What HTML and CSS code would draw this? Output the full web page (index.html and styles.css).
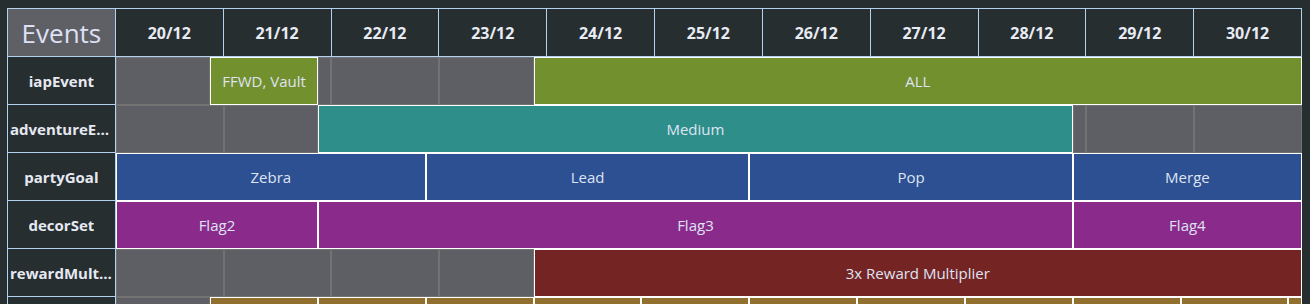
FILE: index.html
```html
<!DOCTYPE html>
<html lang="en">
<head>
<meta charset="utf-8">
<title>Events timeline</title>
<link rel="stylesheet" href="styles.css">
</head>
<body>
<div class="timeline">
  <div class="head corner">Events</div>
  <div class="head">20/12</div>
  <div class="head">21/12</div>
  <div class="head">22/12</div>
  <div class="head">23/12</div>
  <div class="head">24/12</div>
  <div class="head">25/12</div>
  <div class="head">26/12</div>
  <div class="head">27/12</div>
  <div class="head">28/12</div>
  <div class="head">29/12</div>
  <div class="head">30/12</div>

  <div class="label"><span>iapEvent</span></div>
  <div class="track">
    <div class="seg empty" style="width:7.9545%"></div>
    <div class="seg green" style="width:9.0909%">FFWD, Vault</div>
    <div class="seg empty" style="width:1.1364%"></div>
    <div class="seg empty" style="width:9.0909%"></div>
    <div class="seg empty" style="width:7.9545%"></div>
    <div class="seg green" style="width:64.7727%">ALL</div>
  </div>

  <div class="label"><span>adventureEvent</span></div>
  <div class="track">
    <div class="seg empty" style="width:9.0909%"></div>
    <div class="seg empty" style="width:7.9545%"></div>
    <div class="seg teal" style="width:63.6364%">Medium</div>
    <div class="seg empty" style="width:1.1364%"></div>
    <div class="seg empty" style="width:9.0909%"></div>
    <div class="seg empty" style="width:9.0909%"></div>
  </div>

  <div class="label"><span>partyGoal</span></div>
  <div class="track">
    <div class="seg blue" style="width:26.1364%">Zebra</div>
    <div class="seg blue" style="width:27.2727%">Lead</div>
    <div class="seg blue" style="width:27.2727%">Pop</div>
    <div class="seg blue" style="width:19.3182%">Merge</div>
  </div>

  <div class="label"><span>decorSet</span></div>
  <div class="track">
    <div class="seg purple" style="width:17.0455%">Flag2</div>
    <div class="seg purple" style="width:63.6364%">Flag3</div>
    <div class="seg purple" style="width:19.3182%">Flag4</div>
  </div>

  <div class="label"><span>rewardMultiplier</span></div>
  <div class="track">
    <div class="seg empty" style="width:9.0909%"></div>
    <div class="seg empty" style="width:9.0909%"></div>
    <div class="seg empty" style="width:9.0909%"></div>
    <div class="seg empty" style="width:7.9545%"></div>
    <div class="seg red" style="width:64.7727%">3x Reward Multiplier</div>
  </div>

  <div class="label"><span></span></div>
  <div class="track">
    <div class="seg empty" style="width:7.9545%"></div>
    <div class="seg brown" style="width:9.0909%"></div>
    <div class="seg brown" style="width:9.0909%"></div>
    <div class="seg brown" style="width:9.0909%"></div>
    <div class="seg brown" style="width:9.0909%"></div>
    <div class="seg brown" style="width:9.0909%"></div>
    <div class="seg brown" style="width:9.0909%"></div>
    <div class="seg brown" style="width:9.0909%"></div>
    <div class="seg brown" style="width:9.0909%"></div>
    <div class="seg brown" style="width:9.0909%"></div>
    <div class="seg brown" style="width:9.0909%"></div>
    <div class="seg brown" style="width:1.1364%"></div>
  </div>
</div>
</body>
</html>
```

FILE: styles.css
```css
html {
  overflow: hidden;
  background: #262e30;
}

body {
  margin: 8px 8px 0 7px;
  background: #262e30;
  font-family: "Open Sans", "Noto Sans", sans-serif;
  color: #e2e6f2;
}

.timeline {
  display: grid;
  grid-template-columns: repeat(12, minmax(0, 1fr));
  grid-auto-rows: 48px;
  border-left: 1px solid #b3d2f0;
  border-top: 1px solid #b3d2f0;
}

.head {
  display: flex;
  align-items: center;
  justify-content: center;
  border-right: 1px solid #b3d2f0;
  border-bottom: 1px solid #b3d2f0;
  font-weight: 700;
  font-size: 16px;
  color: #e8ebf3;
}

.corner {
  background: #5f6066;
  font-weight: 400;
  font-size: 26px;
  color: #dfe0f6;
}

.label {
  display: flex;
  align-items: center;
  justify-content: center;
  min-width: 0;
  padding: 0 2px;
  border-right: 1px solid #b3d2f0;
  border-bottom: 1px solid #b3d2f0;
  font-weight: 700;
  font-size: 15px;
  color: #e6e9f2;
}

.label span {
  display: block;
  max-width: 100%;
  overflow: hidden;
  white-space: nowrap;
  text-overflow: ellipsis;
}

.track {
  grid-column: 2 / -1;
  display: flex;
  min-width: 0;
}

.seg {
  box-sizing: border-box;
  height: 48px;
  flex: 0 0 auto;
  display: flex;
  align-items: center;
  justify-content: center;
  border: 1px solid #ffffff;
  font-size: 15px;
  color: #dfe3f3;
  white-space: nowrap;
  overflow: hidden;
}

.empty {
  background: #5e5f64;
  border-color: #727273;
}

.green { background: #73902e; }
.teal { background: #2e8f8a; }
.blue { background: #2c5091; }
.purple { background: #8a2b8c; }
.red { background: #742523; }
.brown { background: #916f2e; }
```
